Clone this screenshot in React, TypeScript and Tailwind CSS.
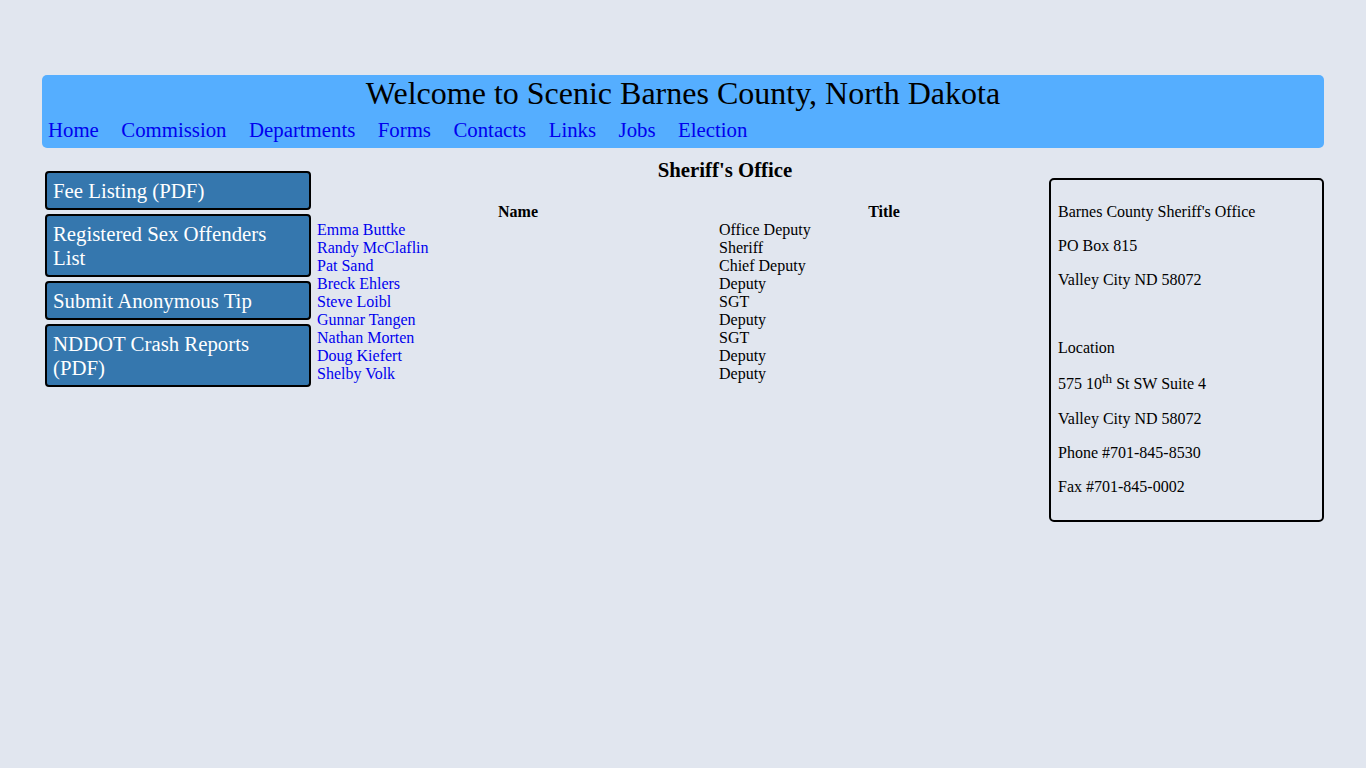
import React from "react";

const nav = ["Home", "Commission", "Departments", "Forms", "Contacts", "Links", "Jobs", "Election"];
const side = ["Fee Listing (PDF)", "Registered Sex Offenders List", "Submit Anonymous Tip", "NDDOT Crash Reports (PDF)"];
const staff: [string, string][] = [
  ["Emma Buttke", "Office Deputy"],
  ["Randy McClaflin", "Sheriff"],
  ["Pat Sand", "Chief Deputy"],
  ["Breck Ehlers", "Deputy"],
  ["Steve Loibl", "SGT"],
  ["Gunnar Tangen", "Deputy"],
  ["Nathan Morten", "SGT"],
  ["Doug Kiefert", "Deputy"],
  ["Shelby Volk", "Deputy"],
];

export default function App() {
  return (
    <div
      className="min-h-[768px] w-full bg-[#e1e6ef] text-black"
      style={{ fontFamily: '"Liberation Serif", "Times New Roman", serif' }}
    >
      <div className="mx-[42px] pt-[75px]">
        <div className="h-[73px] rounded-[5px] bg-[#55aeff] px-[6px]">
          <div className="text-center text-[32px] leading-[36px]">
            Welcome to Scenic Barnes County, North Dakota
          </div>
          <div className="mt-[7px] flex gap-[22.5px] text-[20.8px] leading-[24px]">
            {nav.map((n) => (
              <a key={n} href="#" className="text-[#0000ee]">
                {n}
              </a>
            ))}
          </div>
        </div>

        <div className="flex">
          <div className="ml-[3px] mt-[23px] flex w-[266px] shrink-0 flex-col gap-[4px]">
            {side.map((s) => (
              <div
                key={s}
                className="rounded-[4px] border-2 border-black bg-[#3577ae] px-[6px] py-[5.5px] text-[20.8px] leading-[24px] text-white"
              >
                {s}
              </div>
            ))}
          </div>

          <div className="ml-[6px] flex-1">
            <div className="mt-[10px] pl-[84px] text-center text-[20.8px] font-bold leading-[24px]">
              Sheriff's Office
            </div>
            <table className="mt-[21px] w-full border-collapse text-[16px] leading-[18px]">
              <thead>
                <tr>
                  <th className="w-[402px] p-0 font-bold">Name</th>
                  <th className="p-0 font-bold">Title</th>
                </tr>
              </thead>
              <tbody>
                {staff.map(([n, t]) => (
                  <tr key={n}>
                    <td className="p-0">
                      <a href="#" className="text-[#0000ee]">
                        {n}
                      </a>
                    </td>
                    <td className="p-0">{t}</td>
                  </tr>
                ))}
              </tbody>
            </table>
          </div>

          <div className="mt-[30px] w-[275px] shrink-0 rounded-[5px] border-2 border-black px-[7px] pt-[7px] pb-[8px] text-[16px] leading-[18px]">
            <p className="my-[16px]">Barnes County Sheriff's Office</p>
            <p className="my-[16px]">PO Box 815</p>
            <p className="my-[16px]">Valley City ND 58072</p>
            <p className="my-[16px]">&nbsp;</p>
            <p className="my-[16px]">Location</p>
            <p className="my-[16px] leading-[21px]">
              575 10<sup className="text-[13px]">th</sup> St SW Suite 4
            </p>
            <p className="my-[16px]">Valley City ND 58072</p>
            <p className="my-[16px]">Phone #701-845-8530</p>
            <p className="my-[16px]">Fax #701-845-0002</p>
          </div>
        </div>
      </div>
    </div>
  );
}
